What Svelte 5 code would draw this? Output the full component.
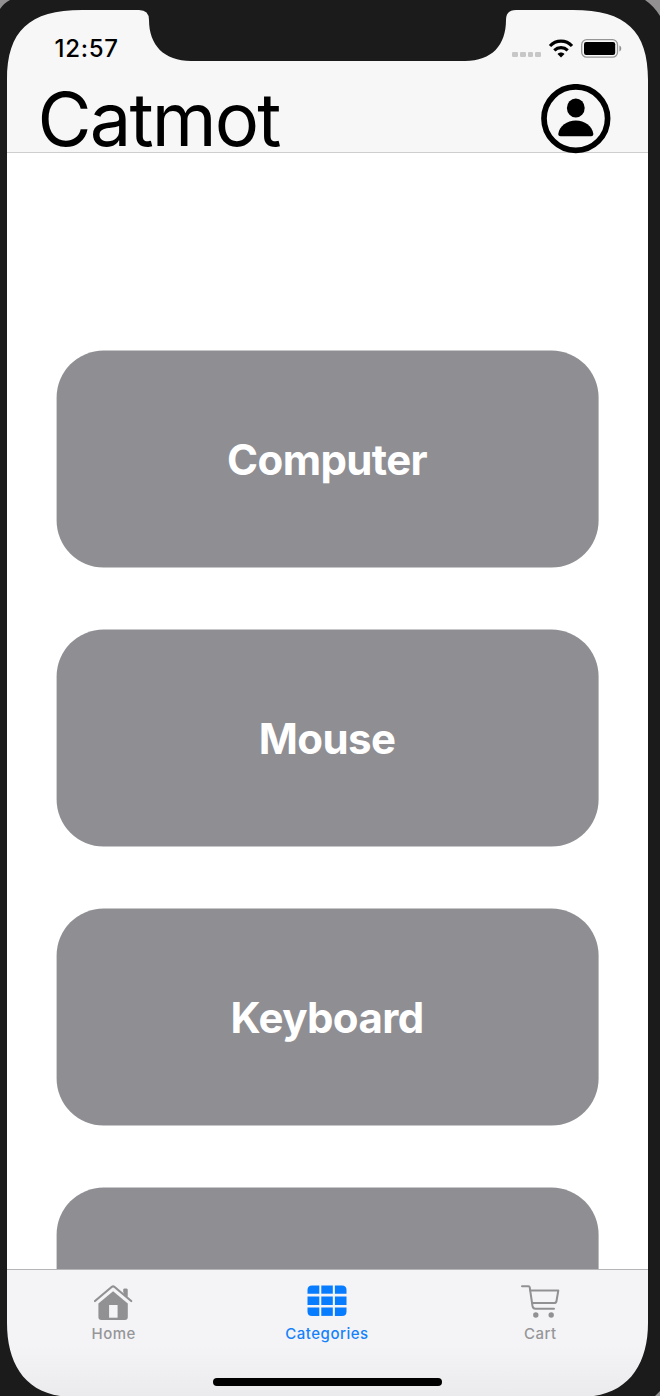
<script>
  const categories = ['Computer', 'Mouse', 'Keyboard', ''];
</script>

<div class="device">
  <div class="screen">
    <header>
      <div class="status">
        <span class="time">12:57</span>
        <div class="indicators">
          <div class="signal"><i></i><i></i><i></i><i></i></div>
          <svg class="wifi" width="26" height="20" viewBox="0 0 26 20">
            <g fill="none" stroke="#000" stroke-width="3.2">
              <path d="M2 8C8 1.600 18 1.600 24 8" />
              <path d="M6.300 12.400c3.800-3.600 9.600-3.600 13.400 0" />
            </g>
            <path d="M13 19.500 9.500 16c1.900-2 5.100-2 7 0Z" />
          </svg>
          <svg class="battery" width="41" height="21" viewBox="0 0 41 21">
            <rect x=".7" y="1.700" width="35.800" height="17.500" rx="5" fill="none" stroke="#969697" stroke-width="1.3" />
            <rect x="3" y="4" width="31.200" height="12.900" rx="2.200" />
            <path d="M38.400 7.500c2.500 1 2.500 5 0 6Z" fill="#929293" />
          </svg>
        </div>
      </div>
      <div class="titlebar">
        <h1>Catmot</h1>
        <svg width="70" height="70" viewBox="0 0 70 70">
          <circle cx="34.8" cy="34.600" r="31.8" fill="none" stroke="#000" stroke-width="5.700" />
          <ellipse cx="34.8" cy="24" rx="8.9" ry="9.600" />
          <path d="M19.500 52.200c-1.600 0-2.400-.8-2.200-2.400C18.300 42 26 36.500 34.800 36.500S51.300 42 52.300 49.800c.2 1.600-.6 2.400-2.200 2.400Z" />
        </svg>
      </div>
    </header>

    <main>
      <div class="list">
        {#each categories as name}
          <div class="card">{name}</div>
        {/each}
      </div>
    </main>

    <nav>
      <div class="tab">
        <svg width="40" height="38" viewBox="0.900 0 40 38">
          <g fill="#919194">
            <path d="M20 6.300 34.700 18.500V32c0 2-1 3-3 3H8.300c-2 0-3-1-3-3V18.500Z" />
            <path d="M30.200 12V4.800q0-1.200 1.200-1.200h1.800q1.200 0 1.200 1.200V15.500Z" />
          </g>
          <path d="M2 17 18.500 3.200q1.500-1.200 3 0L38 17" fill="none" stroke="#f4f4f7" stroke-width="4.700" />
          <path d="M30.600 4.300h3.800v8.500l-3.800-3.200Z" fill="#919194" />
          <path d="M1.900 16 18.500 2q1.500-1.200 3 0L38.100 16" fill="none" stroke="#919194" stroke-width="2.200" stroke-linecap="round" />
          <path d="M16 20h8.500v12.700H16Z" fill="#f4f4f7" />
        </svg>
        <span>Home</span>
      </div>
      <div class="tab active">
        <svg width="40" height="38" viewBox="0 0 40 38">
          <g fill="#087cff">
            <path d="M5 .5h7.300v8.200H.5V5Q.5.500 5 .5Z" />
            <path d="M14.300.500h11.500v8.200H14.300Z" />
            <path d="M27.900.500h7.100q4.500 0 4.500 4.500v3.700H27.900Z" />
            <path d="M.5 11.400h11.800v8.500H.5ZM14.300 11.400h11.500v8.500H14.300ZM27.900 11.400h11.600v8.500H27.900Z" />
            <path d="M.5 22.500h11.800v8.400H5q-4.500 0-4.500-4.500Z" />
            <path d="M14.300 22.500h11.500v8.400H14.300Z" />
            <path d="M27.900 22.500h11.600v3.900q0 4.500-4.500 4.500h-7.100Z" />
          </g>
        </svg>
        <span>Categories</span>
      </div>
      <div class="tab">
        <svg width="40" height="38" viewBox="0 0 40 38">
          <g fill="none" stroke="#919194" stroke-width="2" stroke-linecap="round" stroke-linejoin="round">
            <path d="M2 1.200h6.500q1 0 1.200 1L12.500 21c.4 2.200 1.200 2.700 3 2.700H34" />
            <path d="M10.200 5.500H38.300L36.500 16c-.3 1.700-.9 2.100-2.500 2.100H12.200" />
          </g>
          <circle cx="15.800" cy="30" r="2.700" fill="#919194" />
          <circle cx="31.200" cy="30" r="2.700" fill="#919194" />
        </svg>
        <span>Cart</span>
      </div>
    </nav>
  </div>

  <div class="home-indicator"></div>
  <svg class="bezel" width="660" height="1396" viewBox="0 0 660 1396">
    <path
      fill="#1b1b1b"
      fill-rule="evenodd"
      d="M0 0H660V1396H0Z
         M7 80C7 31 29 10 82 10H139Q149 10 149 20C149 45 164 61 191 61H465C492 61 506 45 506 20Q506 10 516 10H573C626 10 648 31 648 80V1323C648 1366 627 1397 580 1397H74C27 1397 7 1366 7 1323Z"
    />
    <path fill="#929091" d="M0 0H10Q4 3 0 9ZM660 0H645Q654 6 660 16ZM660 1396V1391L655 1396Z" />
  </svg>
</div>

<style>
  :global(body) {
    margin: 0;
    background: #1b1b1b;
  }
  .device {
    position: relative;
    box-sizing: border-box;
    width: 660px;
    height: 1396px;
    padding: 10px 12px 0 7px;
    overflow: hidden;
    background: #1b1b1b;
    font-family: Inter, "Liberation Sans", sans-serif;
  }
  .screen {
    display: flex;
    flex-direction: column;
    height: 1386px;
    background: #fff;
  }
  header {
    box-sizing: border-box;
    height: 143px;
    flex: none;
    background: #f7f7f7;
    border-bottom: 1px solid #cececf;
  }
  .status {
    display: flex;
    justify-content: space-between;
    height: 74px;
    padding: 0 26px 0 47.500px;
  }
  .time {
    padding-top: 24px;
    font-size: 24px;
    line-height: 30px;
    font-weight: 550;
    letter-spacing: 0.700px;
  }
  .indicators {
    display: flex;
    align-items: flex-start;
    padding-top: 28px;
  }
  .signal {
    display: flex;
    gap: 2px;
    padding: 14px 7px 0 0;
  }
  .signal i {
    width: 5.700px;
    height: 5.300px;
    border-radius: 1.300px;
    background: #c7c7c8;
  }
  .wifi {
    margin-right: 7px;
  }
  .titlebar {
    display: flex;
    align-items: flex-start;
    justify-content: space-between;
    height: 68px;
    padding: 0 37px 0 30.500px;
  }
  h1 {
    margin: 0;
    font-size: 74px;
    line-height: 71px;
    font-weight: 400;
    letter-spacing: -1.850px;
  }
  main {
    flex: 1;
    min-height: 0;
    overflow: hidden;
  }
  .list {
    display: flex;
    flex-direction: column;
    align-items: center;
    gap: 62px;
    padding: 198px 0 0;
    transform: translate(-0.400px, -0.400px);
  }
  .card {
    display: flex;
    box-sizing: border-box;
    align-items: center;
    justify-content: center;
    flex: none;
    width: 542px;
    height: 217px;
    border-radius: 47px;
    background: #8f8e93;
    color: #fff;
    font-size: 42px;
    font-weight: 700;
    letter-spacing: -0.600px;
  }
  nav {
    box-sizing: border-box;
    display: flex;
    flex: none;
    height: 127px;
    padding-right: 1px;
    border-top: 1px solid #b5b5b8;
    background: linear-gradient(#f4f4f7 60%, #ebebed);
  }
  .tab {
    display: flex;
    flex: 1;
    flex-direction: column;
    align-items: center;
    padding-top: 15px;
    color: #969699;
    font-size: 15px;
    line-height: 22px;
    font-weight: 500;
    letter-spacing: 0.500px;
  }
  .active {
    color: #1482fb;
  }
  .home-indicator {
    position: absolute;
    left: 213px;
    top: 1378px;
    width: 229px;
    height: 8px;
    border-radius: 4px;
    background: #000;
  }
  .bezel {
    position: absolute;
    inset: 0;
    pointer-events: none;
  }
  svg {
    display: block;
    flex: none;
  }
</style>
